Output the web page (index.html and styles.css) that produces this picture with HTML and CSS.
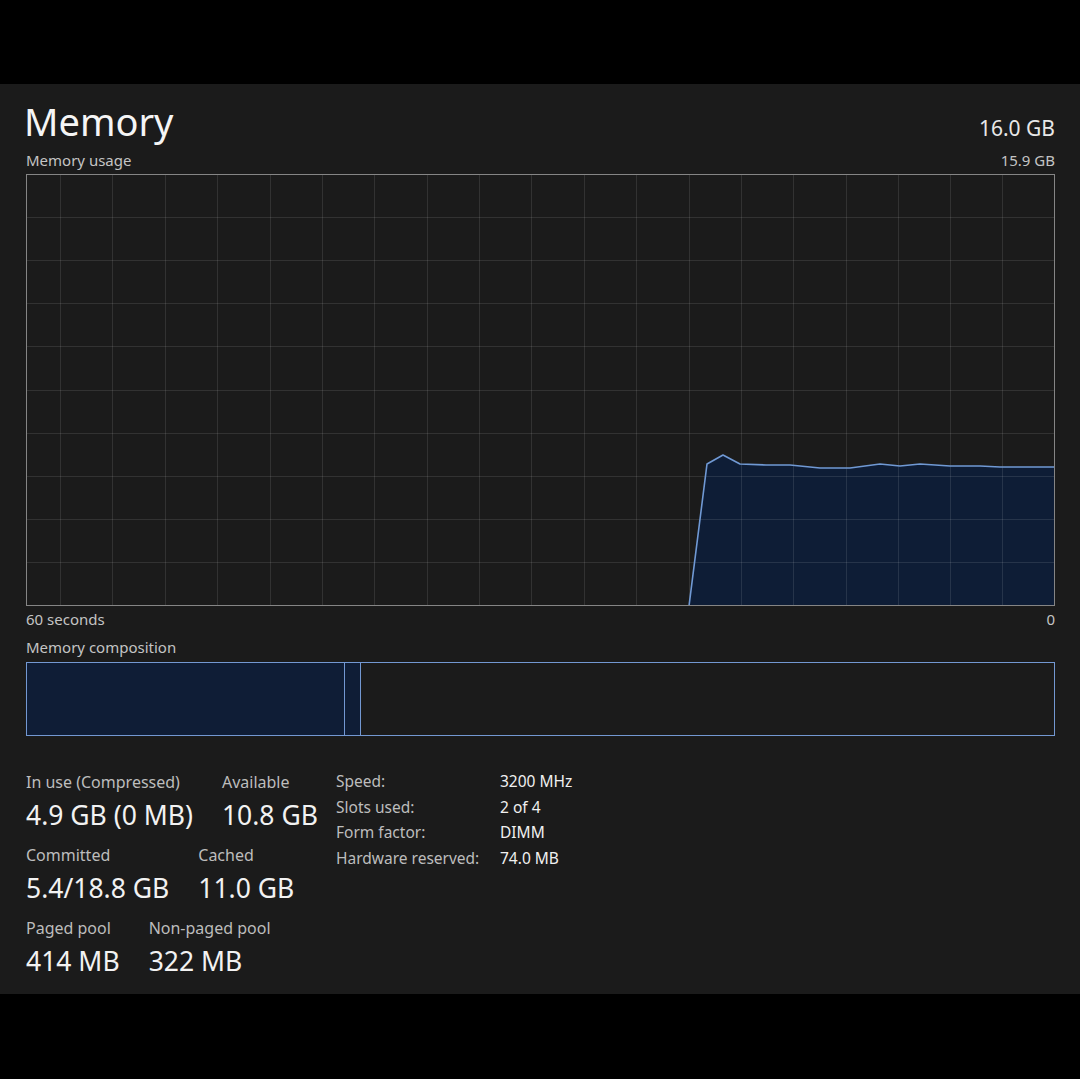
FILE: index.html
```html
<!DOCTYPE html>
<html lang="en">
<head>
    <meta charset="UTF-8">
    <meta name="viewport" content="width=device-width, initial-scale=1.0">
    <title>Memory</title>
    <link rel="stylesheet" href="styles.css">
</head>
<body>
    <div class="panel">
        <div class="header">
            <h1>Memory</h1>
            <span class="total">16.0 GB</span>
        </div>

        <div class="caption-row">
            <span>Memory usage</span>
            <span>15.9 GB</span>
        </div>

        <div class="graph">
            <svg viewBox="0 0 1029 432" width="1029" height="432">
                <!-- usage area -->
                <polygon class="area" points="663,432 681,290 697,281 714,290 740,291 764,291 794,294 824,294 854,290 874,292 894,290 924,292 954,292 974,293 1028,293 1028,432"/>
                <!-- grid -->
                <g class="grid">
                    <line x1="34.5" y1="0" x2="34.5" y2="432"/>
                    <line x1="86.5" y1="0" x2="86.5" y2="432"/>
                    <line x1="139.5" y1="0" x2="139.5" y2="432"/>
                    <line x1="191.5" y1="0" x2="191.5" y2="432"/>
                    <line x1="244.5" y1="0" x2="244.5" y2="432"/>
                    <line x1="296.5" y1="0" x2="296.5" y2="432"/>
                    <line x1="348.5" y1="0" x2="348.5" y2="432"/>
                    <line x1="401.5" y1="0" x2="401.5" y2="432"/>
                    <line x1="453.5" y1="0" x2="453.5" y2="432"/>
                    <line x1="505.5" y1="0" x2="505.5" y2="432"/>
                    <line x1="558.5" y1="0" x2="558.5" y2="432"/>
                    <line x1="610.5" y1="0" x2="610.5" y2="432"/>
                    <line x1="663.5" y1="0" x2="663.5" y2="432"/>
                    <line x1="715.5" y1="0" x2="715.5" y2="432"/>
                    <line x1="767.5" y1="0" x2="767.5" y2="432"/>
                    <line x1="820.5" y1="0" x2="820.5" y2="432"/>
                    <line x1="872.5" y1="0" x2="872.5" y2="432"/>
                    <line x1="924.5" y1="0" x2="924.5" y2="432"/>
                    <line x1="976.5" y1="0" x2="976.5" y2="432"/>
                    <line x1="0" y1="43.5" x2="1029" y2="43.5"/>
                    <line x1="0" y1="86.5" x2="1029" y2="86.5"/>
                    <line x1="0" y1="129.5" x2="1029" y2="129.5"/>
                    <line x1="0" y1="172.5" x2="1029" y2="172.5"/>
                    <line x1="0" y1="216.5" x2="1029" y2="216.5"/>
                    <line x1="0" y1="259.5" x2="1029" y2="259.5"/>
                    <line x1="0" y1="302.5" x2="1029" y2="302.5"/>
                    <line x1="0" y1="345.5" x2="1029" y2="345.5"/>
                    <line x1="0" y1="388.5" x2="1029" y2="388.5"/>
                </g>
                <polyline class="usage" points="663,432 681,290 697,281 714,290 740,291 764,291 794,294 824,294 854,290 874,292 894,290 924,292 954,292 974,293 1028,293"/>
                <rect class="frame" x="0.5" y="0.5" width="1028" height="431"/>
            </svg>
        </div>

        <div class="caption-row axis">
            <span>60 seconds</span>
            <span>0</span>
        </div>

        <div class="caption-row composition-title">
            <span>Memory composition</span>
        </div>

        <div class="composition">
            <div class="segment in-use"></div>
            <div class="segment modified"></div>
            <div class="segment standby"></div>
        </div>

        <div class="details">
            <div class="stats">
                <div class="stat-row">
                    <div class="stat">
                        <div class="label">In use (Compressed)</div>
                        <div class="value">4.9 GB (0 MB)</div>
                    </div>
                    <div class="stat">
                        <div class="label">Available</div>
                        <div class="value">10.8 GB</div>
                    </div>
                </div>
                <div class="stat-row">
                    <div class="stat">
                        <div class="label">Committed</div>
                        <div class="value">5.4/18.8 GB</div>
                    </div>
                    <div class="stat">
                        <div class="label">Cached</div>
                        <div class="value">11.0 GB</div>
                    </div>
                </div>
                <div class="stat-row">
                    <div class="stat">
                        <div class="label">Paged pool</div>
                        <div class="value">414 MB</div>
                    </div>
                    <div class="stat">
                        <div class="label">Non-paged pool</div>
                        <div class="value">322 MB</div>
                    </div>
                </div>
            </div>

            <dl class="info">
                <dt>Speed:</dt><dd>3200 MHz</dd>
                <dt>Slots used:</dt><dd>2 of 4</dd>
                <dt>Form factor:</dt><dd>DIMM</dd>
                <dt>Hardware reserved:</dt><dd>74.0 MB</dd>
            </dl>
        </div>
    </div>
</body>
</html>
```

FILE: styles.css
```css
html, body {
    margin: 0;
    background-color: #000;
}
body {
    font-family: "Noto Sans", "Open Sans", sans-serif;
    color: #f2f2f2;
}
.panel {
    margin-top: 84px;
    height: 910px;
    box-sizing: border-box;
    padding: 15px 25px 0 26px;
    background-color: #1b1b1b;
}
.header {
    display: flex;
    justify-content: space-between;
    align-items: baseline;
    height: 44px;
}
h1 {
    margin: 0 0 0 -2px;
    font-size: 38px;
    font-weight: 400;
    line-height: 44px;
    color: #f5f5f5;
}
.total {
    font-size: 21px;
    color: #e8e8e8;
}
.caption-row {
    display: flex;
    justify-content: space-between;
    margin-top: 8px;
    font-size: 15px;
    line-height: 18px;
    color: #c4c4c4;
}
.graph {
    margin-top: 5px;
}
.graph svg {
    display: block;
}
.grid line {
    stroke: rgba(255,255,255,0.1);
    stroke-width: 1;
}
.area {
    fill: #0e1d36;
}
.usage {
    fill: none;
    stroke: #7099d4;
    stroke-width: 1.6;
    stroke-linejoin: round;
}
.frame {
    fill: none;
    stroke: #858585;
    stroke-width: 1;
}
.caption-row.axis {
    margin-top: 4px;
}
.caption-row.composition-title {
    margin-top: 10px;
}
.composition {
    display: flex;
    height: 74px;
    margin-top: 6px;
    box-sizing: border-box;
    border: 1px solid #7398d2;
}
.segment {
    box-sizing: border-box;
}
.in-use {
    width: 318px;
    background-color: #0f1d36;
    border-right: 1px solid #7398d2;
}
.modified {
    width: 16px;
    background-color: #0f1d36;
    border-right: 1px solid #7398d2;
}
.standby {
    flex: 1;
}
.details {
    display: grid;
    grid-template-columns: 310px auto;
    align-items: start;
    margin-top: 37px;
}
.stat-row {
    display: flex;
    gap: 29px;
    margin-bottom: 16px;
}
.label {
    font-size: 16px;
    line-height: 18px;
    color: #bdbdbd;
}
.value {
    margin-top: 9px;
    font-size: 26.5px;
    line-height: 30px;
    color: #f2f2f2;
}
.info {
    display: grid;
    grid-template-columns: 164px auto;
    margin: -4px 0 0 0;
    font-size: 15.5px;
    line-height: 25.7px;
}
.info dt {
    color: #bdbdbd;
}
.info dd {
    margin: 0;
    color: #f0f0f0;
}
```
